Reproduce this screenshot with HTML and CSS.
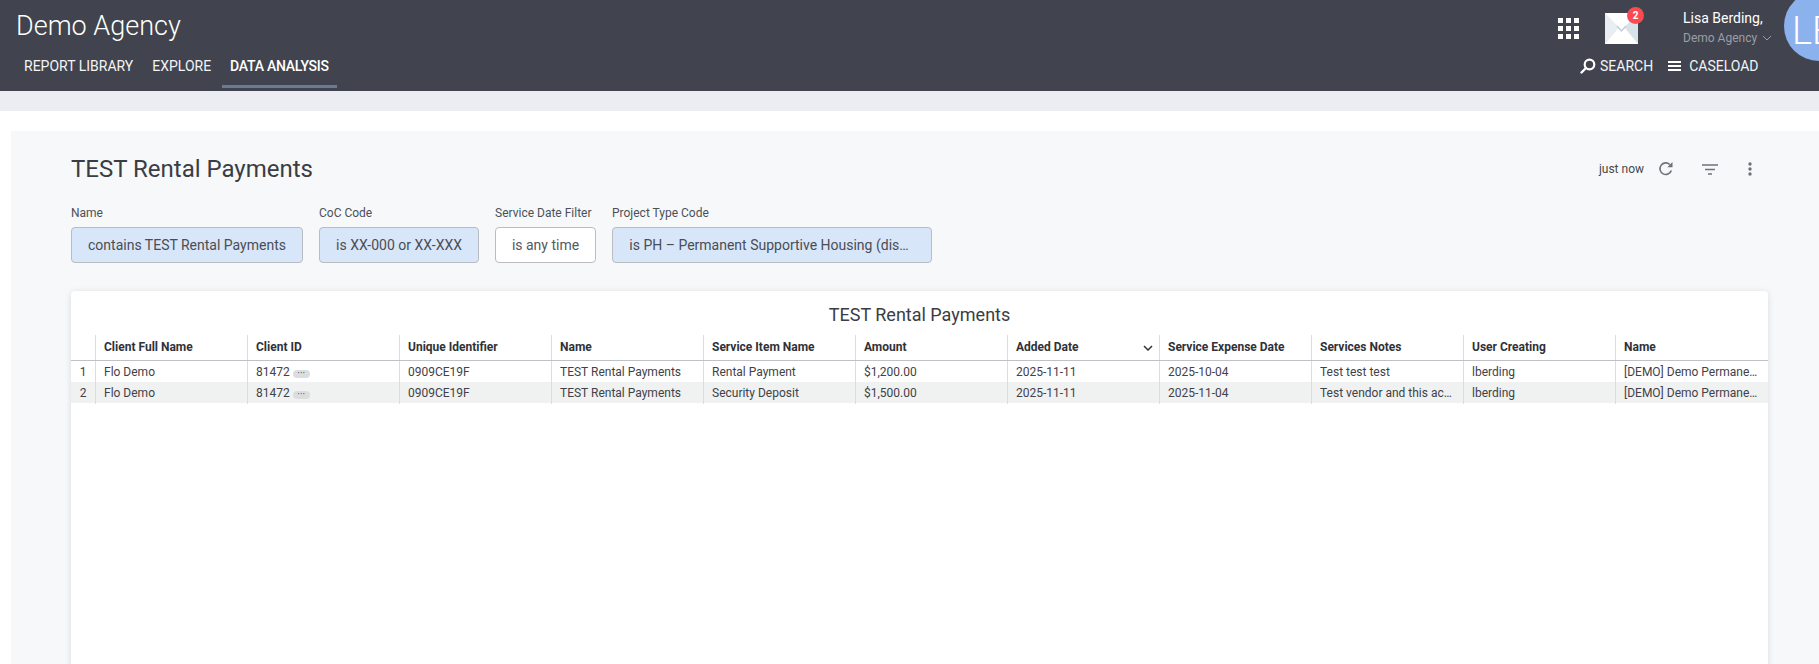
FILE: index.html
```html
<!DOCTYPE html>
<html lang="en">
<head>
<meta charset="utf-8">
<title>TEST Rental Payments</title>
<link rel="stylesheet" href="styles.css">
</head>
<body>
<header class="topbar">
  <div class="brand-col">
    <div class="brand">Demo Agency</div>
    <nav class="nav">
      <a class="nav-item">REPORT LIBRARY</a>
      <a class="nav-item">EXPLORE</a>
      <a class="nav-item active">DATA ANALYSIS</a>
    </nav>
  </div>
  <div class="right-col">
    <div class="right-top">
      <div class="apps"><i></i><i></i><i></i><i></i><i></i><i></i><i></i><i></i><i></i></div>
      <div class="mail">
        <svg width="33" height="31" viewBox="0 0 33 31"><rect width="33" height="31" fill="#e9eef3"/><path d="M0 0 L16.500 17 L33 0 Z" fill="#fff"/><path d="M33 0V31L20 14Z" fill="#d8e2ea"/><path d="M0 31 L13.500 15 Q16.500 12 19.500 15 L33 31Z" fill="#fff"/><path d="M12 13 L16.500 18 L21 13" fill="none" stroke="#c3ced8" stroke-width="1.500"/></svg>
        <span class="badge">2</span>
      </div>
      <div class="user">
        <div class="user-name">Lisa Berding,</div>
        <div class="user-org">Demo Agency <svg width="10" height="6" viewBox="0 0 10 6"><path d="M1 1l4 4 4-4" fill="none" stroke="#9a9da5" stroke-width="1"/></svg></div>
      </div>
      <div class="avatar">LB</div>
    </div>
    <div class="right-bottom">
      <a class="tool search"><svg width="16" height="16" viewBox="0 0 16 16"><circle cx="9.500" cy="6.500" r="4.800" fill="none" stroke="#fff" stroke-width="2.200"/><path d="M6 10l-4.500 4.500" stroke="#fff" stroke-width="2.400" stroke-linecap="round"/></svg>SEARCH</a>
      <a class="tool caseload"><svg width="13" height="10" viewBox="0 0 13 10"><path d="M0 1h13M0 5h13M0 9h13" stroke="#fff" stroke-width="2"/></svg>CASELOAD</a>
    </div>
  </div>
</header>
<div class="strip"></div>
<main class="panel">
  <div class="title-row">
    <h1 class="title">TEST Rental Payments</h1>
    <div class="actions">
      <span class="age">just now</span>
      <svg class="ic-refresh" width="16" height="16" viewBox="0 0 16 16"><path d="M13.300 9.500A5.800 5.800 0 1 1 11.800 3.500" fill="none" stroke="#6f7277" stroke-width="1.600"/><path d="M14.500 1v5.200H9.300z" fill="#6f7277"/></svg>
      <svg class="ic-filter" width="16" height="11" viewBox="0 0 16 11"><path d="M0 1h16M3 5.500h10M6 10h4" stroke="#6f7277" stroke-width="1.500"/></svg>
      <svg class="ic-more" width="4" height="14" viewBox="0 0 4 14"><circle cx="2" cy="2" r="1.700" fill="#6f7277"/><circle cx="2" cy="7" r="1.700" fill="#6f7277"/><circle cx="2" cy="12" r="1.700" fill="#6f7277"/></svg>
    </div>
  </div>
  <div class="filters">
    <div class="filter"><label>Name</label><div class="chip on w-name">contains TEST Rental Payments</div></div>
    <div class="filter"><label>CoC Code</label><div class="chip on w-coc">is XX-000 or XX-XXX</div></div>
    <div class="filter"><label>Service Date Filter</label><div class="chip w-date">is any time</div></div>
    <div class="filter"><label>Project Type Code</label><div class="chip on w-type">is PH – Permanent Supportive Housing (dis…</div></div>
  </div>
  <section class="card">
    <h2 class="card-title">TEST Rental Payments</h2>
    <div class="grid head">
      <div class="idx"></div>
      <div class="c">Client Full Name</div><div class="c">Client ID</div><div class="c">Unique Identifier</div><div class="c">Name</div><div class="c">Service Item Name</div><div class="c">Amount</div>
      <div class="c sorted">Added Date<svg width="10" height="6" viewBox="0 0 10 6"><path d="M1 1l4 4 4-4" fill="none" stroke="#333" stroke-width="1.500"/></svg></div>
      <div class="c">Service Expense Date</div><div class="c">Services Notes</div><div class="c">User Creating</div><div class="c">Name</div>
    </div>
    <div class="grid row">
      <div class="idx">1</div>
      <div class="c">Flo Demo</div><div class="c">81472<span class="more">···</span></div><div class="c">0909CE19F</div><div class="c">TEST Rental Payments</div><div class="c">Rental Payment</div><div class="c">$1,200.00</div><div class="c">2025-11-11</div><div class="c">2025-10-04</div><div class="c">Test test test</div><div class="c">lberding</div><div class="c">[DEMO] Demo Permanent Supportive Housing</div>
    </div>
    <div class="grid row alt">
      <div class="idx">2</div>
      <div class="c">Flo Demo</div><div class="c">81472<span class="more">···</span></div><div class="c">0909CE19F</div><div class="c">TEST Rental Payments</div><div class="c">Security Deposit</div><div class="c">$1,500.00</div><div class="c">2025-11-11</div><div class="c">2025-11-04</div><div class="c">Test vendor and this account note</div><div class="c">lberding</div><div class="c">[DEMO] Demo Permanent Supportive Housing</div>
    </div>
  </section>
</main>
</body>
</html>
```
FILE: styles.css
```css
* { box-sizing: border-box; }
html, body { margin: 0; height: 100%; }
body {
  width: 1819px;
  height: 664px;
  overflow: hidden;
  background: #fff;
  font-family: Roboto, "Liberation Sans", sans-serif;
  color: #3a3d44;
}
.topbar {
  height: 91px;
  background: #41444e;
  display: flex;
  justify-content: space-between;
  color: #fff;
}
.brand-col { padding-left: 16px; }
.brand { font-size: 27px; font-weight: 300; line-height: 33px; padding-top: 10px; height: 46px; }
.nav { display: flex; }
.nav-item {
  font-size: 14px;
  line-height: 20px;
  height: 42px;
  padding: 10px 8px 0;
  margin-right: 3px;
  color: #f4f4f6;
}
.nav-item.active {
  font-weight: 500;
  letter-spacing: -0.25px;
  color: #fff;
  border-bottom: 3px solid #6b7a93;
}
.right-col { width: 261px; position: relative; }
.right-top { display: flex; align-items: flex-start; height: 60px; }
.apps {
  display: grid;
  grid-template-columns: repeat(3, 5px);
  grid-auto-rows: 5px;
  gap: 3px;
  margin: 18px 0 0 0;
}
.apps i { background: #fff; display: block; }
.mail { position: relative; margin: 13px 0 0 26px; width: 33px; height: 31px; }
.mail svg { display: block; }
.badge {
  position: absolute;
  top: -6px;
  right: -6px;
  width: 17px;
  height: 17px;
  border-radius: 50%;
  background: #fb4a52;
  font-size: 10px;
  font-weight: 700;
  line-height: 17px;
  text-align: center;
}
.user { margin-left: 45px; width: 100px; padding-top: 8px; }
.user-name { font-size: 14px; line-height: 20px; white-space: nowrap; }
.user-org { font-size: 12px; line-height: 20px; color: #9b9ea6; white-space: nowrap; }
.user-org svg { margin-left: 2px; vertical-align: 1px; }
.avatar {
  position: absolute;
  left: 226px;
  top: -9px;
  width: 70px;
  height: 70px;
  border-radius: 50%;
  background: #8cb2ee;
  color: #fff;
  font-size: 38px;
  font-weight: 300;
  line-height: 81px;
  padding-left: 8px;
  white-space: nowrap;
}
.right-bottom { display: flex; align-items: center; height: 20px; margin-left: 22px; margin-top: -4px; }
.tool { display: flex; align-items: center; font-size: 14px; line-height: 20px; color: #f4f4f6; white-space: nowrap; }
.search svg { margin-right: 4px; }
.caseload { margin-left: 15px; }
.caseload svg { margin-right: 8px; }
.strip { height: 20px; background: #ecedf2; }
.panel {
  margin: 20px 0 0 11px;
  height: 533px;
  background: #f6f8fa;
  padding: 0 51px 0 60px;
  overflow: hidden;
}
.title-row { display: flex; justify-content: space-between; align-items: center; height: 75px; padding-top: 1px; }
.title { margin: 0; font-size: 24px; font-weight: 400; color: #3a3d44; }
.actions { display: flex; align-items: center; padding-right: 16px; }
.age { font-size: 12px; color: #45484f; }
.ic-refresh { margin-left: 14px; }
.ic-filter { margin-left: 28px; }
.ic-more { margin-left: 30px; }
.filters { display: flex; gap: 16px; }
.filter label { display: block; font-size: 12px; line-height: 14px; color: #4d5058; margin-bottom: 7px; }
.chip {
  height: 36px;
  border: 1px solid #b9bcc1;
  border-radius: 4px;
  background: #fff;
  font-size: 14px;
  line-height: 34px;
  text-align: center;
  color: #55585e;
  white-space: nowrap;
}
.chip.on { background: #d8e6f9; color: #4a4d54; }
.w-name { width: 232px; }
.w-coc { width: 160px; }
.w-date { width: 101px; }
.w-type { width: 320px; padding-right: 6px; }
.card {
  margin-top: 28px;
  height: 400px;
  background: #fff;
  border-radius: 4px;
  box-shadow: 0 1px 6px rgba(0, 0, 0, .12);
}
.card-title { margin: 0; height: 44px; padding-top: 12px; font-size: 18px; line-height: 24px; font-weight: 400; text-align: center; color: #3a3d44; }
.grid { display: grid; grid-template-columns: 24px repeat(11, 152px); }
.head { height: 26px; border-bottom: 1px solid #bfc1c6; font-size: 12px; font-weight: 700; color: #2f3238; line-height: 25px; }
.row { height: 21px; font-size: 12px; line-height: 22px; color: #3f4248; }
.row.alt { background: #f0f1f1; }
.idx { text-align: center; font-size: 12px; }
.c {
  border-left: 1px solid #dcdde0;
  padding: 0 8px;
  white-space: nowrap;
  overflow: hidden;
  text-overflow: ellipsis;
}
.sorted { display: flex; align-items: center; justify-content: space-between; padding-right: 6px; }
.more {
  display: inline-block;
  margin-left: 3px;
  width: 17px;
  height: 8px;
  border-radius: 4px;
  background: #dcdddf;
  font-size: 10px;
  line-height: 8px;
  text-align: center;
  vertical-align: -1px;
  color: #55585e;
}
```
